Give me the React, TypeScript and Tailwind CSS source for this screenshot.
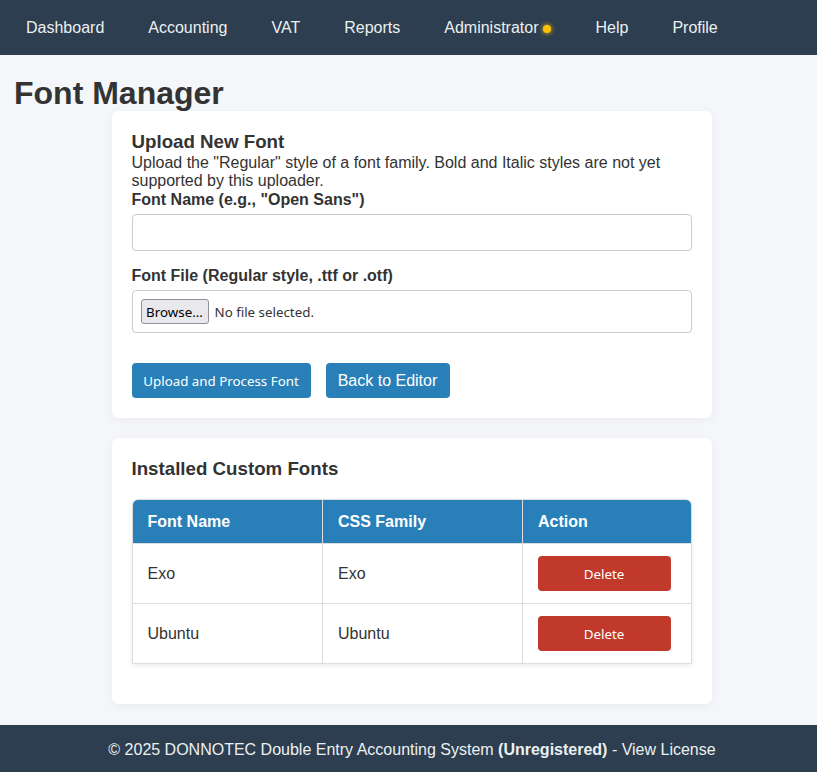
import type { ReactNode } from 'react'

const navItems = ['Dashboard', 'Accounting', 'VAT', 'Reports', 'Administrator', 'Help', 'Profile']

const fonts = [
  { name: 'Exo', family: 'Exo' },
  { name: 'Ubuntu', family: 'Ubuntu' },
]

function Card({ children, className = '' }: { children: ReactNode; className?: string }) {
  return (
    <section className={`w-[600px] rounded-md bg-white px-5 shadow-[0_2px_10px_rgba(0,0,0,0.05)] ${className}`}>
      {children}
    </section>
  )
}

export default function App() {
  return (
    <div className="flex min-h-[772px] flex-col bg-[#f4f6f9] font-['Liberation_Sans',Arial,sans-serif] text-base text-[#333333]">
      <nav className="flex h-[55px] items-center gap-[44px] bg-[#2c3e50] pl-[26px] text-[#ecf0f1]">
        {navItems.map((item) => (
          <a key={item} href="#" className="flex items-center">
            {item}
            {item === 'Administrator' && (
              <span className="ml-[5px] mt-[3px] h-2 w-2 rounded-full bg-[#ffc107] shadow-[0_0_5px_#ffc107]" />
            )}
          </a>
        ))}
      </nav>

      <main className="flex-1">
        <h1 className="ml-[14px] mt-[20px] text-[32px] leading-[36px] font-bold">Font Manager</h1>

        <div className="ml-[111.5px] flex flex-col gap-5">
          <Card className="h-[307px] pt-[19px]">
            <h3 className="text-[18.72px] leading-[23px] font-bold">Upload New Font</h3>
            <p className="mt-px leading-[18.4px]">
              Upload the "Regular" style of a font family. Bold and Italic styles are not yet supported by this uploader.
            </p>
            <label className="block leading-[18.4px] font-bold">Font Name (e.g., "Open Sans")</label>
            <input
              type="text"
              className="mt-[5px] block h-[37px] w-full rounded border border-[#cccccc] bg-white px-2"
            />
            <label className="mt-4 block leading-[18.4px] font-bold">Font File (Regular style, .ttf or .otf)</label>
            <div className="mt-[4px] flex h-[43px] w-full items-center rounded border border-[#cccccc] pl-2 font-['Noto_Sans',sans-serif] text-[13.33px]">
              <button
                type="button"
                className="h-[25px] w-[68px] rounded-[3px] border border-[#8f8f9d] bg-[#e9e9ed] pt-[2px] text-center leading-[18px] text-black"
              >
                Browse...
              </button>
              <span className="ml-[6px] pt-[4px] text-[#333333]">No file selected.</span>
            </div>
            <div className="mt-[30px] flex gap-[15px]">
              <button
                type="button"
                className="h-[35px] w-[179px] rounded bg-[#2980b9] pt-[4px] text-center font-['Noto_Sans',sans-serif] text-[13.33px] text-white"
              >
                Upload and Process Font
              </button>
              <a
                href="#"
                className="flex h-[35px] w-[124px] items-center justify-center rounded bg-[#2980b9] pt-[2px] text-white"
              >
                Back to Editor
              </a>
            </div>
          </Card>

          <Card className="h-[266px] pt-[20px]">
            <h3 className="text-[18.72px] leading-[21px] font-bold">Installed Custom Fonts</h3>
            <table className="mt-[20px] w-[560px] table-fixed border-separate border-spacing-0 overflow-hidden rounded-t-md border border-[#dddddd] shadow-[0_2px_5px_rgba(0,0,0,0.08)]">
              <thead>
                <tr className="h-[44px] bg-[#2980b9] text-left font-bold text-white">
                  <th className="w-[189px] border-b border-[#dddddd] pl-[15px]">Font Name</th>
                  <th className="w-[200px] border-b border-l border-[#dddddd] pl-[15.5px]">CSS Family</th>
                  <th className="border-b border-l border-[#dddddd] pl-[15.5px]">Action</th>
                </tr>
              </thead>
              <tbody>
                {fonts.map((font, i) => (
                  <tr key={font.name} className={i === 0 ? 'h-[60px]' : 'h-[59px]'}>
                    <td className={`pl-[15px] ${i === 0 ? 'border-b border-[#dddddd]' : ''}`}>{font.name}</td>
                    <td className={`border-l border-[#dddddd] pl-[15.5px] ${i === 0 ? 'border-b' : ''}`}>{font.family}</td>
                    <td className={`border-l border-[#dddddd] pl-[15px] ${i === 0 ? 'border-b' : ''}`}>
                      <button
                        type="button"
                        className="block h-[35px] w-[133px] rounded bg-[#c0392b] pt-[2px] text-center font-['Noto_Sans',sans-serif] text-[13.33px] text-white"
                      >
                        Delete
                      </button>
                    </td>
                  </tr>
                ))}
              </tbody>
            </table>
          </Card>
        </div>
      </main>

      <footer className="flex h-[47px] items-center justify-center bg-[#2c3e50] pl-[7px] pt-[2px] text-[#ecf0f1]">
        <span>
          © 2025 DONNOTEC Double Entry Accounting System <strong>(Unregistered)</strong> - View License
        </span>
      </footer>
    </div>
  )
}
